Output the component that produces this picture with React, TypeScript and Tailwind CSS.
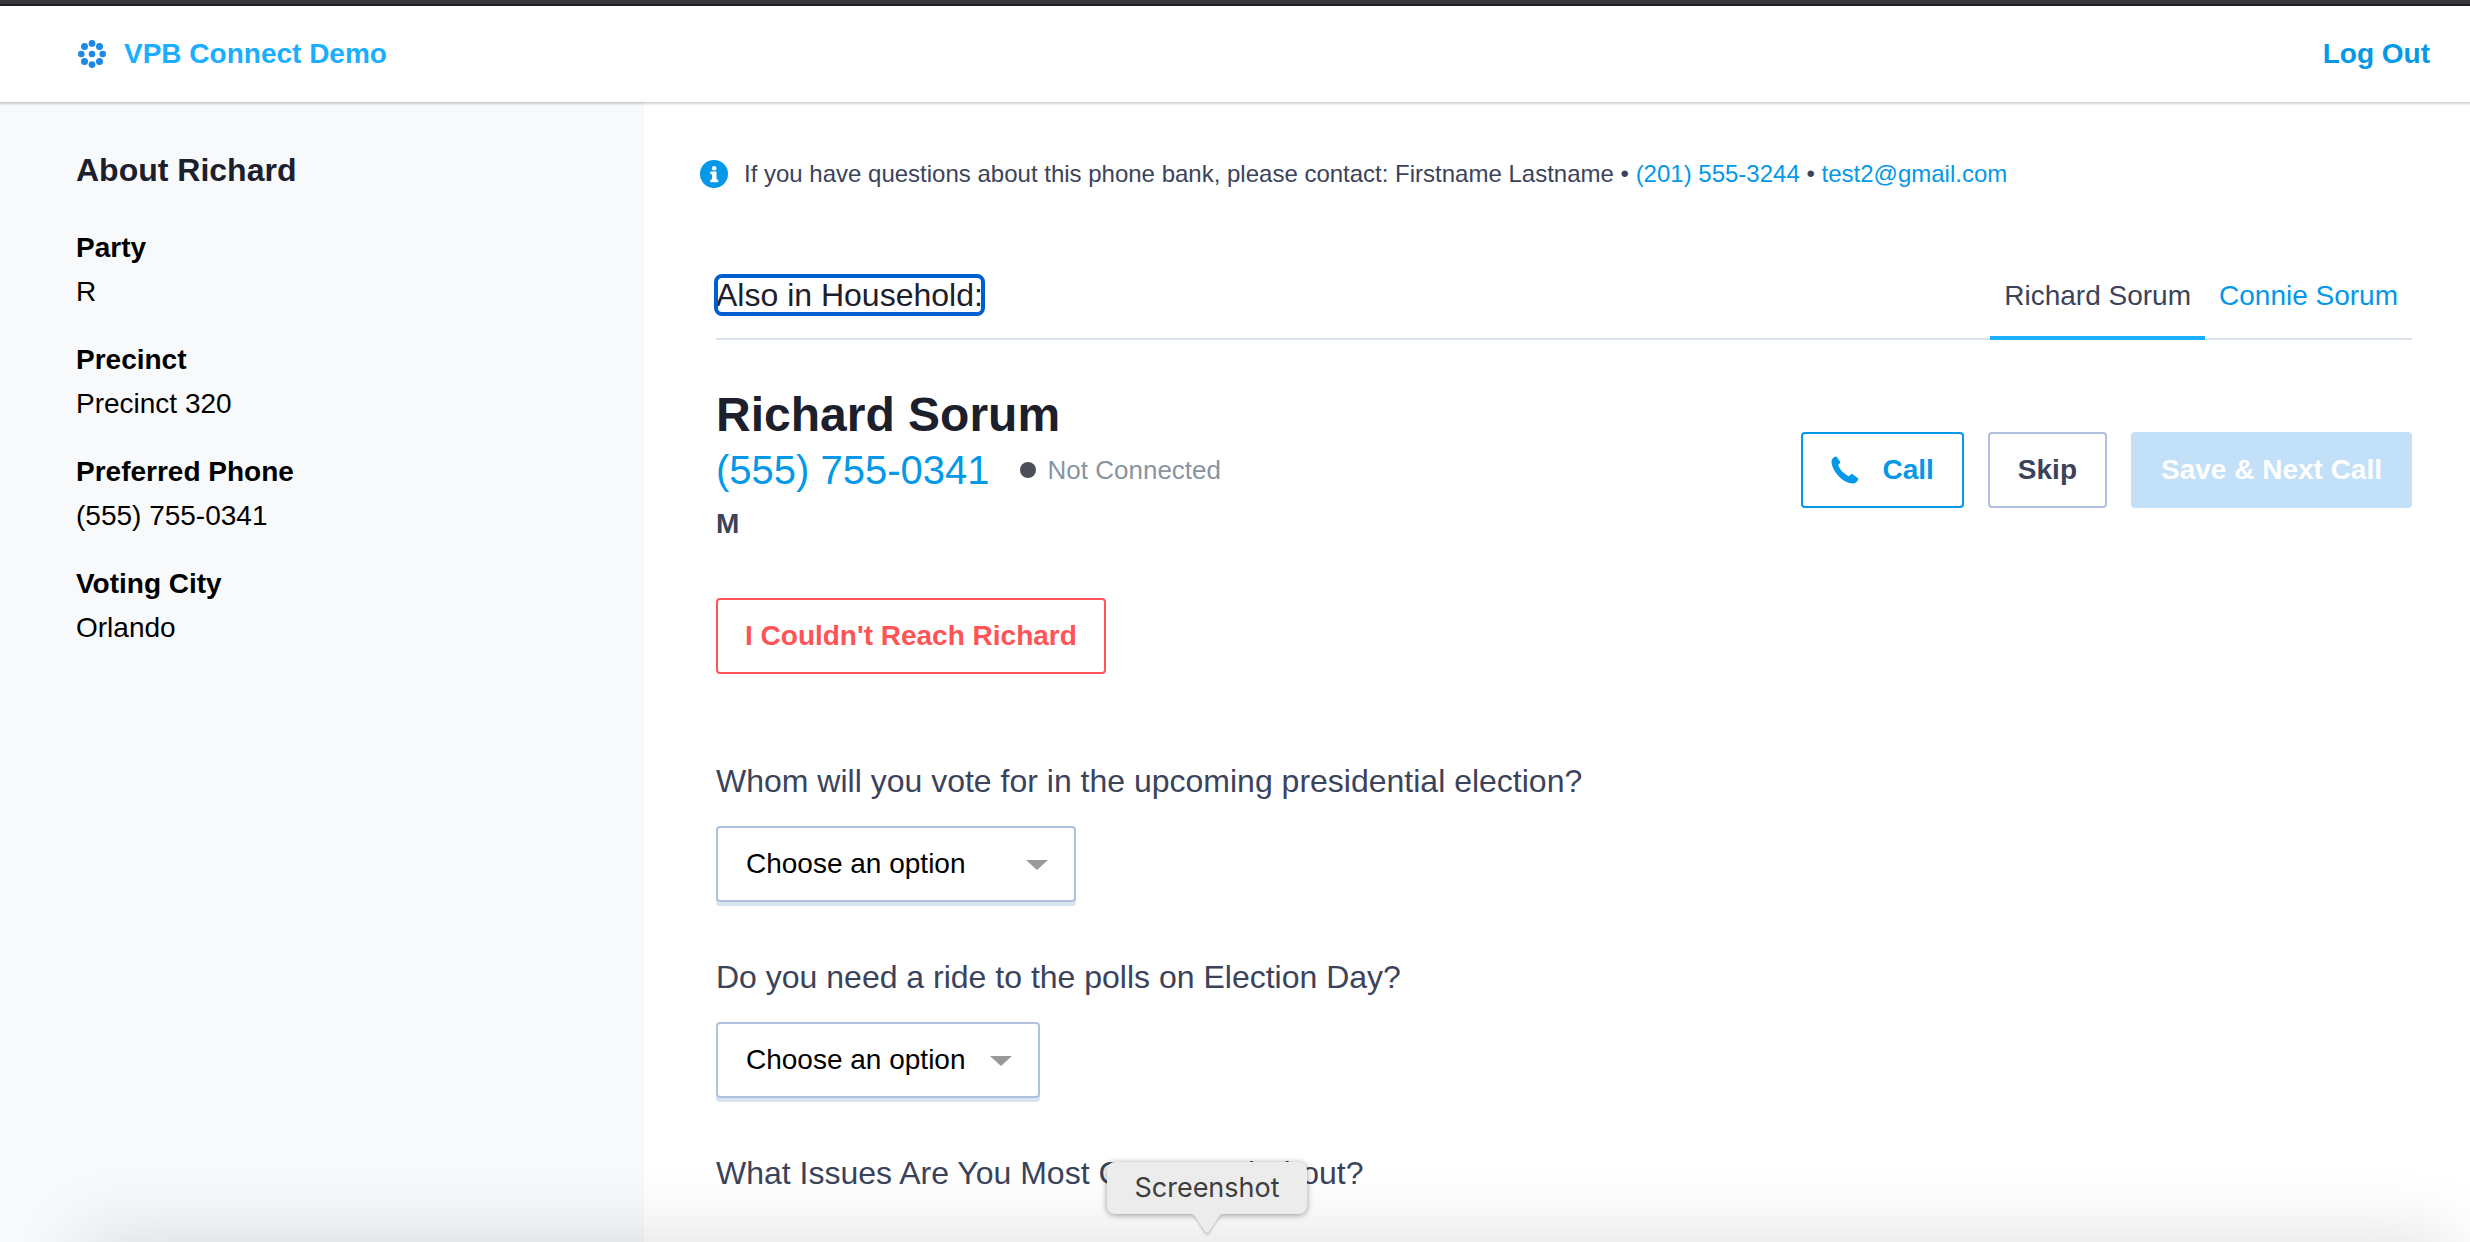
import React, { useState } from "react";

const details = [
  { label: "Party", value: "R" },
  { label: "Precinct", value: "Precinct 320" },
  { label: "Preferred Phone", value: "(555) 755-0341" },
  { label: "Voting City", value: "Orlando" },
];

function Logo() {
  return (
    <svg className="size-7" viewBox="0 0 28 28" fill="#1e88e5" aria-hidden="true">
      <circle cx="14" cy="14" r="3.3" />
      <circle cx="14" cy="3.4" r="3.4" />
      <circle cx="14" cy="24.6" r="3.4" />
      <circle cx="3.300" cy="14" r="3.3" />
      <circle cx="24.700" cy="14" r="3.3" />
      <circle cx="6.5" cy="6.5" r="3.5" />
      <circle cx="21.5" cy="6.5" r="3.5" />
      <circle cx="6.5" cy="21.5" r="3.5" />
      <circle cx="21.5" cy="21.5" r="3.5" />
    </svg>
  );
}

function InfoIcon() {
  return (
    <svg className="size-7 shrink-0" viewBox="0 0 28 28" aria-hidden="true">
      <circle cx="14" cy="14" r="14" fill="#0398e8" />
      <circle cx="14.2" cy="8.2" r="2.3" fill="#fff" />
      <path d="M10.3 11.600h6.200v8h1.700v2.600h-7.900v-2.600H12v-5.400h-1.700z" fill="#fff" />
    </svg>
  );
}

function PhoneIcon() {
  return (
    <svg className="size-7" viewBox="0 0 28 28" fill="currentColor" aria-hidden="true">
      <path d="M4 .8c.7-.6 1.300-.5 1.800.2L9 5.600c.4.6.3 1.200-.2 1.700L7.200 9c1 3.800 5.800 9 10.600 11.200l2.400-1.900c.5-.4 1-.4 1.500 0l5.200 3.900c.5.4.6 1 .3 1.500-1.300 2.400-2.900 3.800-5.200 3.800C12.500 27.500.8 15.500.5 5.500.4 3.400 2 1.800 4 .8z" />
    </svg>
  );
}

type QuestionProps = { id: string; text: string; width: string; options: string[] };

function Question({ id, text, width, options }: QuestionProps) {
  return (
    <div className="flex flex-col items-start">
      <label htmlFor={id} className="text-[32px] leading-12 text-[#3b435b]">
        {text}
      </label>
      <div className={"relative mt-[21px] " + width}>
        <select
          id={id}
          className="h-19 w-full appearance-none rounded border-2 border-[#b0c0de] bg-white px-7 text-[28px] text-black shadow-[0_4px_0_#d9e4ee]"
        >
          <option>Choose an option</option>
          {options.map((o) => (
            <option key={o}>{o}</option>
          ))}
        </select>
        <svg
          className="pointer-events-none absolute top-8.5 right-7 h-2.5 w-5.5"
          viewBox="0 0 22 10"
          fill="#999"
          aria-hidden="true"
        >
          <path d="M0 0h22L11 10z" />
        </svg>
      </div>
    </div>
  );
}

export default function App() {
  const [active, setActive] = useState("Richard Sorum");
  return (
    <div className="relative flex h-screen flex-col overflow-hidden bg-white font-['Liberation_Sans',Arial,sans-serif] text-[28px] leading-11 text-black">
      <div className="h-1.5 shrink-0 border-b-2 border-[#222224] bg-[#37383b]" />
      <header className="z-10 flex h-24 shrink-0 items-center justify-between pr-10 pl-19.5 font-bold shadow-[0_1px_2px_1px_rgba(0,0,0,0.18)]">
        <a href="#home" className="flex items-center gap-4.5 text-[#1aaeff]">
          <Logo />
          VPB Connect Demo
        </a>
        <button type="button" className="text-[#0398e8]">
          Log Out
        </button>
      </header>

      <div className="flex min-h-0 flex-1">
        <aside className="w-161 shrink-0 bg-[#f8f9fb] px-19 pt-11">
          <h2 className="text-[32px] leading-12 font-bold text-[#1b202c]">About Richard</h2>
          <dl className="mt-8 flex flex-col gap-6">
            {details.map((d) => (
              <div key={d.label}>
                <dt className="font-bold">{d.label}</dt>
                <dd>{d.value}</dd>
              </div>
            ))}
          </dl>
        </aside>

        <main className="min-w-0 flex-1 pr-14.5 pl-18">
          <div className="-ml-4 flex items-center gap-4 pt-12.5 text-2xl leading-11 text-[#3b435b]">
            <InfoIcon />
            <p>
              If you have questions about this phone bank, please contact: Firstname Lastname •{" "}
              <a href="tel:2015553244" className="text-[#0398e8]">(201) 555-3244</a> •{" "}
              <a href="mailto:test2@gmail.com" className="text-[#0398e8]">test2@gmail.com</a>
            </p>
          </div>

          <div className="mt-17 flex items-start justify-between border-b-2 border-[#d9e2ec]">
            <h3
              tabIndex={-1}
              className="mt-3 rounded-md text-[32px] leading-9.5 text-[#1b202c] outline-4 -outline-offset-2 outline-[#005fd0]"
            >
              Also in Household:
            </h3>
            <nav className="-mb-0.5 flex" aria-label="Household members">
              {["Richard Sorum", "Connie Sorum"].map((name) => (
                <button
                  key={name}
                  type="button"
                  onClick={() => setActive(name)}
                  className={
                    name === active
                      ? "h-19 border-b-4 border-[#1aaeff] px-3.5 pb-2 text-[#3b435b]"
                      : "h-19 border-b-4 border-transparent px-3.5 pb-2 text-[#0398e8]"
                  }
                >
                  {name}
                </button>
              ))}
            </nav>
          </div>

          <section className="mt-11 flex items-start justify-between">
            <div>
              <h1 className="text-5xl leading-[62px] font-bold text-[#1b202c]">Richard Sorum</h1>
              <div className="flex items-center gap-7.5">
                <a href="tel:5557550341" className="text-[40px] leading-12 text-[#0398e8]">
                  (555) 755-0341
                </a>
                <span className="flex items-center gap-3 text-[26px] text-[#8a94a0]">
                  <span className="size-4 rounded-full bg-[#4a4f58]" />
                  Not Connected
                </span>
              </div>
              <p className="mt-2 font-bold text-[#3b435b]">M</p>
            </div>
            <div className="mt-12 flex gap-6 font-bold">
              <button
                type="button"
                className="flex h-19 items-center gap-6 rounded border-2 border-[#0398e8] px-7 text-[#0398e8]"
              >
                <PhoneIcon />
                Call
              </button>
              <button
                type="button"
                className="h-19 rounded border-2 border-[#b0c0de] px-7 text-[#3b435b]"
              >
                Skip
              </button>
              <button type="button" disabled className="h-19 rounded bg-[#c2e0f8] px-7.5 text-white">
                Save &amp; Next Call
              </button>
            </div>
          </section>

          <button
            type="button"
            className="mt-13 h-19 rounded border-2 border-[#ff5355] px-[27px] font-bold text-[#ff5355]"
          >
            I Couldn't Reach Richard
          </button>

          <div className="mt-[83px] flex flex-col gap-[51px]">
            <Question
              id="vote"
              text="Whom will you vote for in the upcoming presidential election?"
              width="w-90"
              options={["Undecided"]}
            />
            <Question
              id="ride"
              text="Do you need a ride to the polls on Election Day?"
              width="w-81"
              options={["Yes", "No"]}
            />
            <p className="text-[32px] leading-12 text-[#3b435b]">
              What Issues Are You Most Concerned About?
            </p>
          </div>
        </main>
      </div>

      <div className="pointer-events-none absolute right-7 -bottom-61 left-23 z-20 h-60 shadow-[0_0_70px_10px_rgba(0,0,0,0.12)]" />
      <div
        role="tooltip"
        className="absolute bottom-7 left-1/2 z-30 -ml-32 flex h-13 w-50 items-center justify-center rounded-lg bg-[#ececec] font-[Inter,sans-serif] text-[27px] text-[#3d3d3d] shadow-[0_1px_6px_rgba(0,0,0,0.4)]"
      >
        Screenshot
        <svg
          className="absolute top-full left-1/2 -ml-4 h-5 w-8 drop-shadow-[0_2px_1px_rgba(0,0,0,0.2)]"
          viewBox="0 0 32 20"
          fill="#ececec"
          aria-hidden="true"
        >
          <path d="M0 0h32c-2 0-3 1-4 2.500L18 17.500c-1 1.700-3 1.700-4 0L4 2.500C3 1 2 0 0 0z" />
        </svg>
      </div>
    </div>
  );
}
